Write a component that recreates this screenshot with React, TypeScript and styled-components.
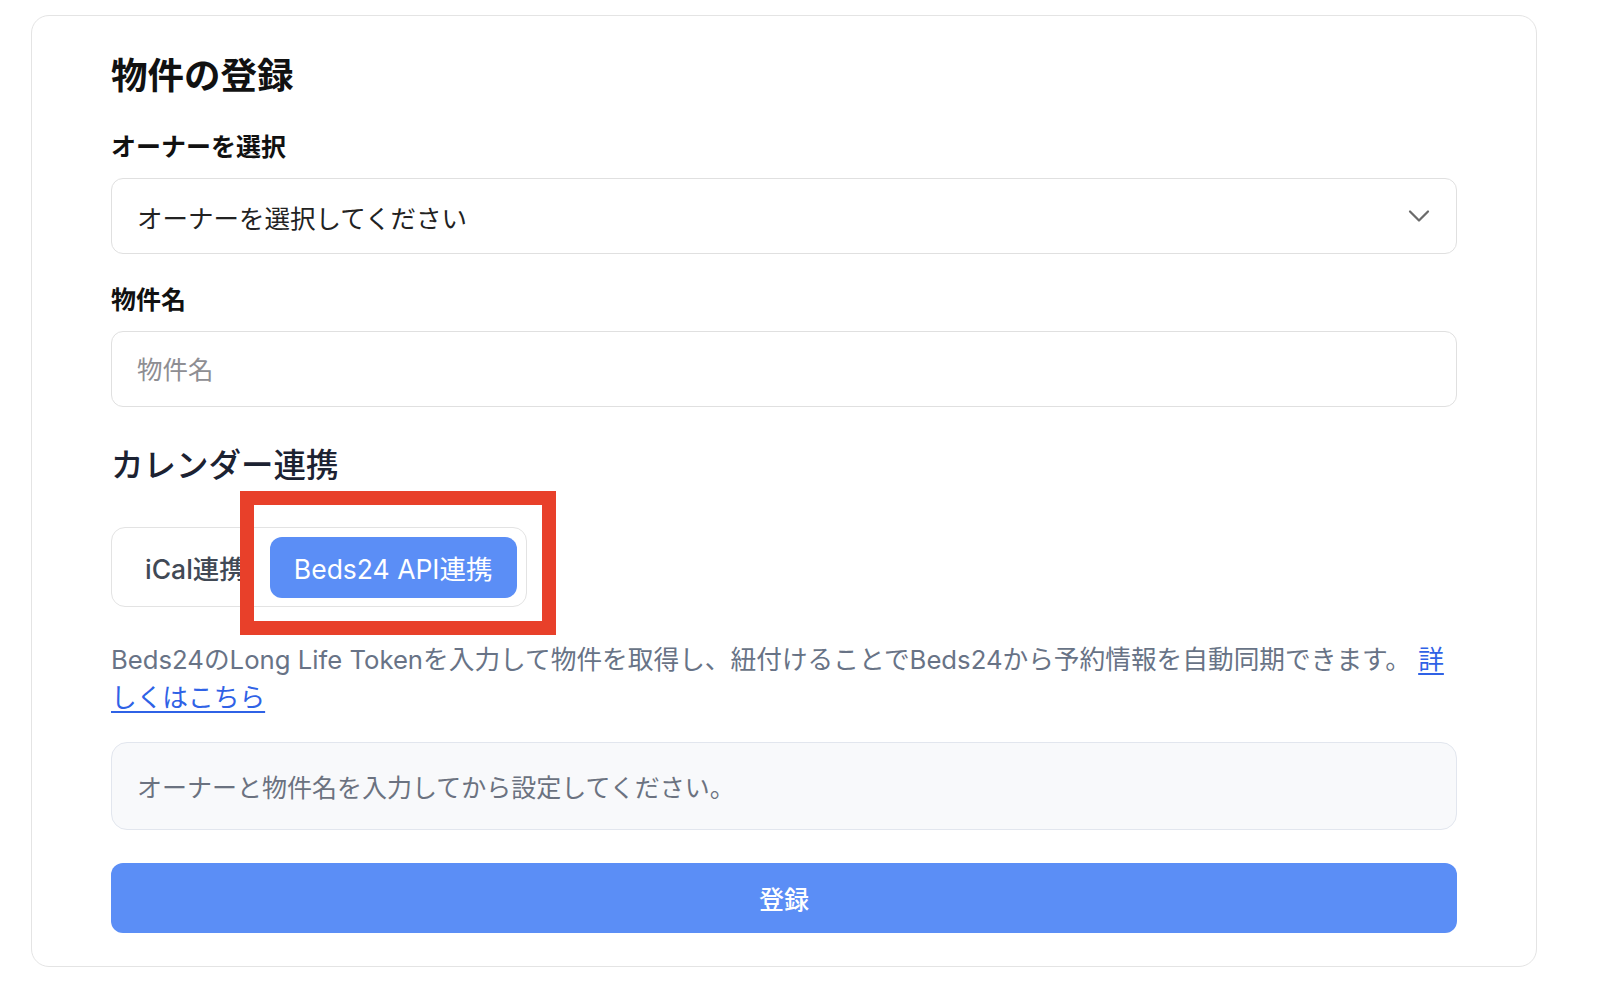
import React from 'react';
import styled, { createGlobalStyle } from 'styled-components';
import { ChevronDown } from 'lucide-react';

const GlobalStyle = createGlobalStyle`
  * {
    box-sizing: border-box;
  }
  body {
    margin: 0;
    background: #ffffff;
    font-family: "Inter", "Noto Sans CJK JP", sans-serif;
    color: #111827;
  }
`;

const Card = styled.div`
  margin: 15px 0 0 31px;
  width: 1506px;
  border: 1.5px solid #e4e4e4;
  border-radius: 18px;
  background: #ffffff;
  padding: 35px 79px 33px;
  display: flex;
  flex-direction: column;
`;

const Title = styled.h1`
  margin: 0;
  font-size: 36.5px;
  line-height: 50px;
  font-weight: 700;
  color: #111111;
`;

const Label = styled.label<{ $top: number }>`
  display: block;
  margin-top: ${(p) => p.$top}px;
  font-size: 25px;
  line-height: 34px;
  font-weight: 700;
  color: #111111;
`;

const SelectBox = styled.div`
  margin-top: 14px;
  height: 76px;
  border: 1.5px solid #e0e0e0;
  border-radius: 12px;
  padding: 0 19px 0 25px;
  display: flex;
  align-items: center;
  justify-content: space-between;
  font-size: 25.5px;
  color: #222222;
  cursor: pointer;
`;

const TextInput = styled.input`
  margin-top: 14px;
  height: 76px;
  width: 100%;
  border: 1.5px solid #e0e0e0;
  border-radius: 12px;
  padding: 0 25px;
  font-family: inherit;
  font-size: 25.5px;
  color: #222222;
  outline: none;

  &::placeholder {
    color: #8e8e93;
  }
`;

const SectionHeading = styled.h2`
  margin: 37px 0 0;
  font-size: 32.5px;
  line-height: 44px;
  font-weight: 500;
  color: #1c2232;
`;

const TabRow = styled.div`
  margin-top: 39px;
  position: relative;
  align-self: flex-start;
`;

const TabGroup = styled.div`
  display: flex;
  align-items: center;
  height: 80px;
  padding: 9px;
  border: 1.5px solid #e3e3e3;
  border-radius: 14px;
`;

const Tab = styled.button<{ $active?: boolean }>`
  height: 61px;
  padding: 0 24px;
  border: none;
  border-radius: 12px;
  font-family: inherit;
  font-size: 26.5px;
  font-weight: ${(p) => (p.$active ? 400 : 500)};
  background: ${(p) => (p.$active ? '#5b8ef6' : 'transparent')};
  color: ${(p) => (p.$active ? '#ffffff' : '#414955')};
  cursor: pointer;
  white-space: nowrap;
`;

const Highlight = styled.div`
  position: absolute;
  left: 129px;
  top: -36px;
  width: 316px;
  height: 144px;
  border: 14px solid #e8402a;
  pointer-events: none;
`;

const Description = styled.p`
  margin: 34px 0 0;
  font-size: 25.7px;
  line-height: 38px;
  color: #687386;
`;

const Link = styled.a`
  color: #2f62e6;
  text-decoration: underline;
  text-underline-offset: 4px;
`;

const Notice = styled.div`
  margin-top: 25px;
  height: 88px;
  display: flex;
  align-items: center;
  padding: 0 25px;
  background: #f8f9fb;
  border: 1.5px solid #e2e6ee;
  border-radius: 16px;
  font-size: 25px;
  color: #6b7280;
`;

const SubmitButton = styled.button`
  margin-top: 33px;
  height: 70px;
  width: 100%;
  border: none;
  border-radius: 12px;
  background: #5b8ef6;
  color: #ffffff;
  font-family: inherit;
  font-size: 25px;
  font-weight: 500;
  cursor: pointer;
`;

const App: React.FC = () => {
  return (
    <>
      <GlobalStyle />
      <Card>
        <Title>物件の登録</Title>

        <Label $top={29}>オーナーを選択</Label>
        <SelectBox>
          <span>オーナーを選択してください</span>
          <ChevronDown size={36} strokeWidth={1.5} color="#6b6b6b" />
        </SelectBox>

        <Label $top={29}>物件名</Label>
        <TextInput placeholder="物件名" />

        <SectionHeading>カレンダー連携</SectionHeading>

        <TabRow>
          <TabGroup>
            <Tab>iCal連携</Tab>
            <Tab $active>Beds24 API連携</Tab>
          </TabGroup>
          <Highlight />
        </TabRow>

        <Description>
          Beds24のLong Life Tokenを入力して物件を取得し、紐付けることでBeds24から予約情報を自動同期できます。{' '}
          <Link href="#">詳しくはこちら</Link>
        </Description>

        <Notice>オーナーと物件名を入力してから設定してください。</Notice>

        <SubmitButton>登録</SubmitButton>
      </Card>
    </>
  );
};

export default App;
